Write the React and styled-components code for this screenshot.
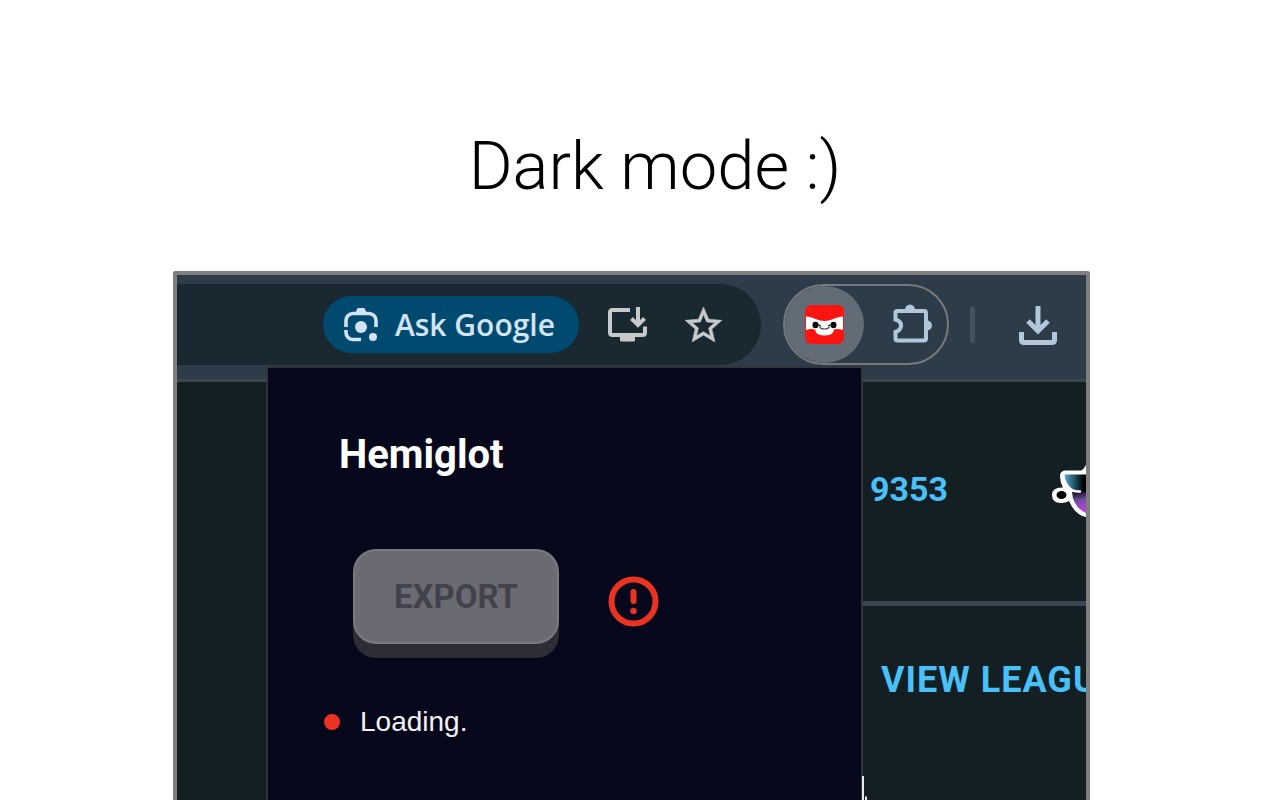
import React from "react";
import styled, { createGlobalStyle } from "styled-components";

const GlobalStyle = createGlobalStyle`
  * {
    box-sizing: border-box;
  }
  body {
    margin: 0;
    background: #ffffff;
  }
`;

const Page = styled.main`
  height: 100vh;
  overflow: hidden;
  display: flex;
  flex-direction: column;
  padding: 0 190px 0 173px;
  font-family: Roboto, "Liberation Sans", sans-serif;
`;

const Title = styled.h1`
  margin: 0;
  padding: 126px 0 65px 47px;
  font-size: 67px;
  line-height: 80px;
  font-weight: 300;
  text-align: center;
  color: #000000;
`;

const Frame = styled.section`
  position: relative;
  flex: 1;
  display: flex;
  flex-direction: column;
  overflow: hidden;
  border: 4px solid #7f7f7f;
  border-bottom: none;
  border-radius: 3px 3px 0 0;
  background: #141f23;
`;

const Toolbar = styled.header`
  display: flex;
  align-items: flex-start;
  height: 107px;
  flex-shrink: 0;
  padding-top: 9px;
  background: #2e3c49;
  border-bottom: 3px solid #3b474f;
`;

const Omnibox = styled.div`
  display: flex;
  align-items: center;
  justify-content: flex-end;
  flex: 1;
  height: 81px;
  padding-right: 38px;
  border-radius: 0 41px 41px 0;
  background: #1a2832;
`;

const IconButton = styled.button`
  display: flex;
  align-items: center;
  justify-content: center;
  width: 40px;
  height: 40px;
  padding: 0;
  border: none;
  background: none;
  color: ${props => props.$color || "#c7c9cd"};
`;

const AskButton = styled.button`
  display: flex;
  align-items: center;
  gap: 17px;
  height: 57px;
  padding: 0 24px 0 21px;
  border: none;
  border-radius: 29px;
  background: #004a6f;
  color: #d3e3f5;
  font-family: "Open Sans", sans-serif;
  font-size: 30px;
  font-weight: 600;
  white-space: nowrap;
`;

const OmniActions = styled.div`
  display: flex;
  gap: 36px;
  margin-left: 28px;
`;

const Extensions = styled.div`
  display: flex;
  align-items: center;
  width: 166px;
  height: 81px;
  margin: 0 21px 0 22px;
  border: 2px solid #77797f;
  border-radius: 41px;
`;

const ActiveExtension = styled.button`
  display: flex;
  align-items: center;
  justify-content: center;
  width: 79px;
  height: 77px;
  margin-right: 28px;
  padding: 0;
  border: none;
  border-radius: 50%;
  background: #626c77;
`;

const Divider = styled.span`
  width: 5px;
  height: 37px;
  margin: 22px 43px 0 0;
  border-radius: 2px;
  background: #44525e;
`;

const Download = styled.div`
  margin: 21px 28px 0 0;
`;

const SiteContent = styled.div`
  flex: 1;
  padding-left: 686px;
`;

const StatsRow = styled.div`
  display: flex;
  align-items: center;
  justify-content: space-between;
  height: 224px;
  padding-left: 7px;
  border-bottom: 5px solid #37464f;
`;

const Score = styled.span`
  padding-bottom: 6px;
  font-size: 34px;
  line-height: 40px;
  font-weight: 700;
  color: #49c0f8;
`;

const LeagueLink = styled.a`
  display: block;
  padding: 54px 0 0 18px;
  font-size: 36px;
  line-height: 40px;
  font-weight: 700;
  letter-spacing: 1px;
  white-space: nowrap;
  text-decoration: none;
  color: #49c0f8;
`;

const Popup = styled.aside`
  position: absolute;
  top: 91px;
  left: 89px;
  bottom: 0;
  width: 597px;
  padding: 60px 56px 0;
  border: 2px solid #30343b;
  border-bottom: none;
  background: #07081c;
`;

const PopupTitle = styled.h2`
  margin: 0 0 67px 15px;
  font-size: 40px;
  line-height: 54px;
  font-weight: 700;
  color: #ffffff;
`;

const ExportRow = styled.div`
  display: flex;
  align-items: center;
  gap: 49px;
  padding-left: 29px;
`;

const ExportButton = styled.button`
  width: 206px;
  height: 95px;
  margin-bottom: 10px;
  border: 2px solid #797980;
  border-radius: 23px;
  background: #6a6a73;
  box-shadow: 0 14px 0 #2d2d35;
  color: #42424c;
  font-family: Roboto, sans-serif;
  font-size: 33px;
  font-weight: 700;
`;

const Status = styled.p`
  display: flex;
  align-items: center;
  gap: 20px;
  margin: 51px 0 0;
  font-family: "Liberation Sans", sans-serif;
  font-size: 28px;
  line-height: 34px;
  color: #f2f2f4;
`;

const StatusDot = styled.span`
  width: 16px;
  height: 16px;
  border-radius: 50%;
  background: #ea3323;
`;

const Cursor = styled.svg`
  position: absolute;
  left: 685px;
  bottom: 0;
`;

const LensIcon = () => (
  <svg width="34" height="34" viewBox="0 0 34 34" fill="none">
    <path d="M2 19v-6.500a7 7 0 0 1 7-7h16a7 7 0 0 1 7 7V19M2 22v2.500a7 7 0 0 0 7 7h8" stroke="currentColor" strokeWidth="3.600" />
    <path d="M11.500 5l1.500-4q.5-1 1.500-1h5q1 0 1.500 1l1.500 4z" fill="currentColor" />
    <circle cx="17" cy="19" r="6" fill="currentColor" />
    <circle cx="29" cy="29" r="4" fill="currentColor" />
  </svg>
);

const InstallIcon = () => (
  <svg width="39" height="35" viewBox="0 0 39 35" fill="none" stroke="currentColor" strokeWidth="4">
    <path d="M22 3H4.500q-2.500 0-2.500 2.500v20q0 2.500 2.500 2.500h30q2.500 0 2.500-2.500V19.500M30 0v17M23.500 11.500l6.500 6.500 6.500-6.500" />
    <path d="M12 28h15v5q0 1.500-1.500 1.500h-12q-1.500 0-1.500-1.500z" fill="currentColor" stroke="none" />
  </svg>
);

const StarIcon = () => (
  <svg width="37" height="35" viewBox="2 2 20 19" fill="currentColor" stroke="currentColor" strokeWidth="0.300">
    <path d="M22 9.240l-7.190-.62L12 2 9.190 8.630 2 9.240l5.460 4.730L5.820 21 12 17.270 18.180 21l-1.630-7.030L22 9.240zM12 15.400l-3.760 2.270 1-4.280-3.320-2.880 4.380-.38L12 6.100l1.710 4.040 4.380.38-3.320 2.880 1 4.280L12 15.400z" />
  </svg>
);

const NinjaIcon = () => (
  <svg width="39" height="39" viewBox="0 0 39 39">
    <rect width="39" height="39" rx="6" fill="#fb1410" />
    <path d="M1 11.500C8 11.500 12 16 19.500 16S31 11.500 38 11.500V25q-5-1.500-9-.5l-1 3q-2 3-8.500 3t-8.500-3l-1-3Q6 23.500 1 25z" fill="#fff" />
    <ellipse cx="10.500" cy="20" rx="3" ry="3.300" />
    <ellipse cx="28.500" cy="20" rx="3" ry="3.300" />
    <path d="M12 19l4 2M27 19l-4 2" stroke="#222" strokeWidth="1.200" />
    <path d="M14.500 21.500q1 2.500 5 2.500t5-2.500" fill="none" stroke="#444" strokeWidth="1.200" />
  </svg>
);

const PuzzleIcon = () => (
  <svg width="39" height="42" viewBox="0 0 39 42" fill="none">
    <path d="M4.500 7H31q2 0 2 2v25.500q0 2-2 2H4.500q-2 0-2-2V28q5.500-2 5.500-6.500t-5.500-6V9q0-2 2-2z" stroke="currentColor" strokeWidth="4" />
    <path d="M12 6a5 5.500 0 0 1 10 0zM34 16.500a5 5 0 0 1 0 10z" fill="currentColor" />
  </svg>
);

const DownloadIcon = () => (
  <svg width="38" height="39" viewBox="0 0 38 39" fill="none" stroke="currentColor" strokeWidth="5">
    <path d="M19 0v25M9 15l10 10 10-10M2.500 26v8q0 2.500 2.500 2.500h28q2.500 0 2.500-2.500v-8" />
  </svg>
);

const AlertIcon = () => (
  <svg width="51" height="51" viewBox="0 0 51 51" fill="none" role="img" aria-label="Error">
    <circle cx="25.500" cy="25.500" r="22" stroke="#ea3323" strokeWidth="6" />
    <path d="M25.500 16v9" stroke="#ea3323" strokeWidth="6" strokeLinecap="round" />
    <circle cx="25.500" cy="35" r="3.200" fill="#ea3323" />
  </svg>
);

const MascotIcon = () => (
  <svg width="34" height="54" viewBox="0 0 34 54">
    <defs>
      <linearGradient id="visor" x1="0" x2="1">
        <stop offset="0" stopColor="#5aa7d8" />
        <stop offset="0.500" stopColor="#1d4c58" />
        <stop offset="0.900" stopColor="#000" />
      </linearGradient>
      <linearGradient id="chin" x1="0.600" x2="0.500" y1="1" y2="0">
        <stop offset="0" stopColor="#c63fe0" />
        <stop offset="0.600" stopColor="#6d4f9c" />
        <stop offset="1" stopColor="#0a0812" />
      </linearGradient>
    </defs>
    <path d="M34 0q-3 5-5 5.500H14q-6 0-6 5.500 0 6 3 11.500Q0 22 0 30t9 8q5 0 8-2 6 14 17 16z" fill="#fff" />
    <path d="M12.500 9.500H34V30q-6-4-13-5-8-7-8.500-15.500z" fill="url(#visor)" />
    <path d="M20 27q7 1 14-1v22q-13-6-14-21z" fill="url(#chin)" />
    <path d="M19 24.500q5 2.500 9 2" fill="none" stroke="#fff" strokeWidth="2.500" strokeLinecap="round" />
    <ellipse cx="9.500" cy="30" rx="5" ry="4" />
  </svg>
);

const App = () => {
  return (
    <Page>
      <GlobalStyle />
      <Title>Dark mode :)</Title>
      <Frame>
        <Toolbar>
          <Omnibox>
            <AskButton type="button">
              <LensIcon />
              Ask Google
            </AskButton>
            <OmniActions>
              <IconButton type="button" aria-label="Install">
                <InstallIcon />
              </IconButton>
              <IconButton type="button" aria-label="Bookmark">
                <StarIcon />
              </IconButton>
            </OmniActions>
          </Omnibox>
          <Extensions>
            <ActiveExtension type="button" aria-label="Hemiglot">
              <NinjaIcon />
            </ActiveExtension>
            <IconButton type="button" aria-label="Extensions" $color="#b4c7da">
              <PuzzleIcon />
            </IconButton>
          </Extensions>
          <Divider />
          <Download>
            <IconButton type="button" aria-label="Downloads" $color="#b4c7da">
              <DownloadIcon />
            </IconButton>
          </Download>
        </Toolbar>
        <SiteContent>
          <StatsRow>
            <Score>9353</Score>
            <MascotIcon />
          </StatsRow>
          <LeagueLink href="#league">VIEW LEAGUE</LeagueLink>
        </SiteContent>
        <Popup>
          <PopupTitle>Hemiglot</PopupTitle>
          <ExportRow>
            <ExportButton type="button" disabled>
              EXPORT
            </ExportButton>
            <AlertIcon />
          </ExportRow>
          <Status>
            <StatusDot />
            Loading.
          </Status>
        </Popup>
        <Cursor width="6" height="24" viewBox="0 0 6 24" fill="#e8e8e8">
          <path d="M0 0h2v24H0zM3 20l2 1v3H3z" />
        </Cursor>
      </Frame>
    </Page>
  );
};

export default App;
